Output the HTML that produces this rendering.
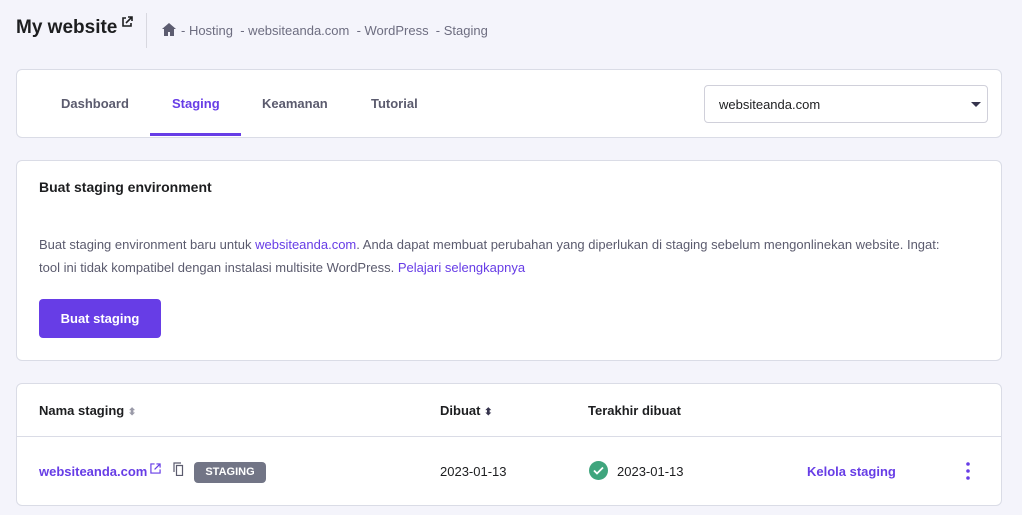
<!DOCTYPE html><html><head><style>
body{margin:0;width:1022px;height:515px;background:#f4f4fb;font-family:"Liberation Sans",sans-serif;color:#2f1c6a;position:relative;overflow:hidden}
.a{position:absolute}
.card{position:absolute;left:16px;width:984px;background:#fff;border:1px solid #dadce6;border-radius:6px}
.t{color:#36344d}
.p{color:#673de6}
</style></head><body>
<div class="a" style="left:16px;top:17px;font-size:19px;font-weight:bold;color:#1d1e20">My website</div>
<svg class="a" style="left:121px;top:16px" width="12" height="12" viewBox="0 0 12 12"><path d="M5 2H2v8h8V7M7 1h4v4M11 1L5 7" fill="none" stroke="#1d1e20" stroke-width="1.6"/></svg>
<div class="a" style="left:146px;top:13px;width:1px;height:35px;background:#d8d8e0"></div>
<svg class="a" style="left:162px;top:23px" width="14" height="13" viewBox="0 0 14 13"><path d="M7 0L0 6h2v7h4V9h2v4h4V6h2z" fill="#5c5c70"/></svg>
<div class="a" style="left:181px;top:23px;font-size:13px;color:#6d6d80">- Hosting &nbsp;- websiteanda.com &nbsp;- WordPress &nbsp;- Staging</div>

<div class="card" style="top:69px;height:67px">
<div class="a t" style="left:44px;top:26px;font-size:13px;font-weight:bold;color:#5b5b6e">Dashboard</div>
<div class="a p" style="left:155px;top:26px;font-size:13px;font-weight:bold">Staging</div>
<div class="a" style="left:133px;top:63px;width:91px;height:3px;background:#673de6"></div>
<div class="a" style="left:245px;top:26px;font-size:13px;font-weight:bold;color:#5b5b6e">Keamanan</div>
<div class="a" style="left:354px;top:26px;font-size:13px;font-weight:bold;color:#5b5b6e">Tutorial</div>
<div class="a" style="left:687px;top:15px;width:282px;height:36px;border:1px solid #d0d0da;border-radius:4px">
<div class="a" style="left:14px;top:11px;font-size:13px;color:#1d1e20">websiteanda.com</div>
<div class="a" style="left:266px;top:16px;width:0;height:0;border-left:5px solid transparent;border-right:5px solid transparent;border-top:5px solid #36344d"></div></div>
</div>

<div class="card" style="top:160px;height:199px">
<div class="a" style="left:22px;top:18px;font-size:14px;font-weight:bold;color:#1d1e20">Buat staging environment</div>
<div class="a" style="left:22px;top:72px;width:918px;font-size:13px;line-height:23px;color:#5b5b6e">Buat staging environment baru untuk <span class="p">websiteanda.com</span>. Anda dapat membuat perubahan yang diperlukan di staging sebelum mengonlinekan website. Ingat: tool ini tidak kompatibel dengan instalasi multisite WordPress. <span class="p">Pelajari selengkapnya</span></div>
<div class="a" style="left:22px;top:138px;width:122px;height:39px;background:#673de6;border-radius:4px;color:#fff;font-size:13px;font-weight:bold;text-align:center;line-height:39px">Buat staging</div>
</div>

<div class="card" style="top:383px;height:121px">
<div class="a" style="left:22px;top:19px;font-size:13px;font-weight:bold;color:#1d1e20">Nama staging <span style="color:#9a9aa8;font-size:10px">⬍</span></div>
<div class="a" style="left:423px;top:19px;font-size:13px;font-weight:bold;color:#1d1e20">Dibuat <span style="color:#36344d;font-size:10px">⬍</span></div>
<div class="a" style="left:571px;top:19px;font-size:13px;font-weight:bold;color:#1d1e20">Terakhir dibuat</div>
<div class="a" style="left:0;top:52px;width:984px;height:1px;background:#dadce6"></div>
<div class="a p" style="left:22px;top:80px;font-size:13px;font-weight:bold">websiteanda.com</div>
<svg class="a" style="left:133px;top:79px" width="11" height="11" viewBox="0 0 12 12"><path d="M5 1H1v10h10V7M7 1h4v4M11 1L5 7" fill="none" stroke="#673de6" stroke-width="1.3"/></svg>
<svg class="a" style="left:156px;top:78px" width="11" height="14" viewBox="0 0 11 14"><path d="M1 10V1h7M3.5 3.5h6v10h-6z" fill="none" stroke="#5b5b6e" stroke-width="1.2"/></svg>
<div class="a" style="left:177px;top:78px;width:72px;height:21px;background:#727586;border-radius:4px;color:#fff;font-size:11px;font-weight:bold;text-align:center;line-height:21px">STAGING</div>
<div class="a" style="left:423px;top:80px;font-size:13px;color:#1d1e20">2023-01-13</div>
<svg class="a" style="left:572px;top:77px" width="19" height="19" viewBox="0 0 19 19"><circle cx="9.5" cy="9.5" r="9.5" fill="#3fa57d"/><path d="M5 9.5l3 3 6-6" fill="none" stroke="#fff" stroke-width="1.8"/></svg>
<div class="a" style="left:600px;top:80px;font-size:13px;color:#1d1e20">2023-01-13</div>
<div class="a p" style="left:790px;top:80px;font-size:13px;font-weight:bold">Kelola staging</div>
<svg class="a" style="left:948px;top:78px" width="6" height="18"><circle cx="3" cy="2" r="1.8" fill="#673de6"/><circle cx="3" cy="9" r="1.8" fill="#673de6"/><circle cx="3" cy="16" r="1.8" fill="#673de6"/></svg>
</div>
</body></html>
